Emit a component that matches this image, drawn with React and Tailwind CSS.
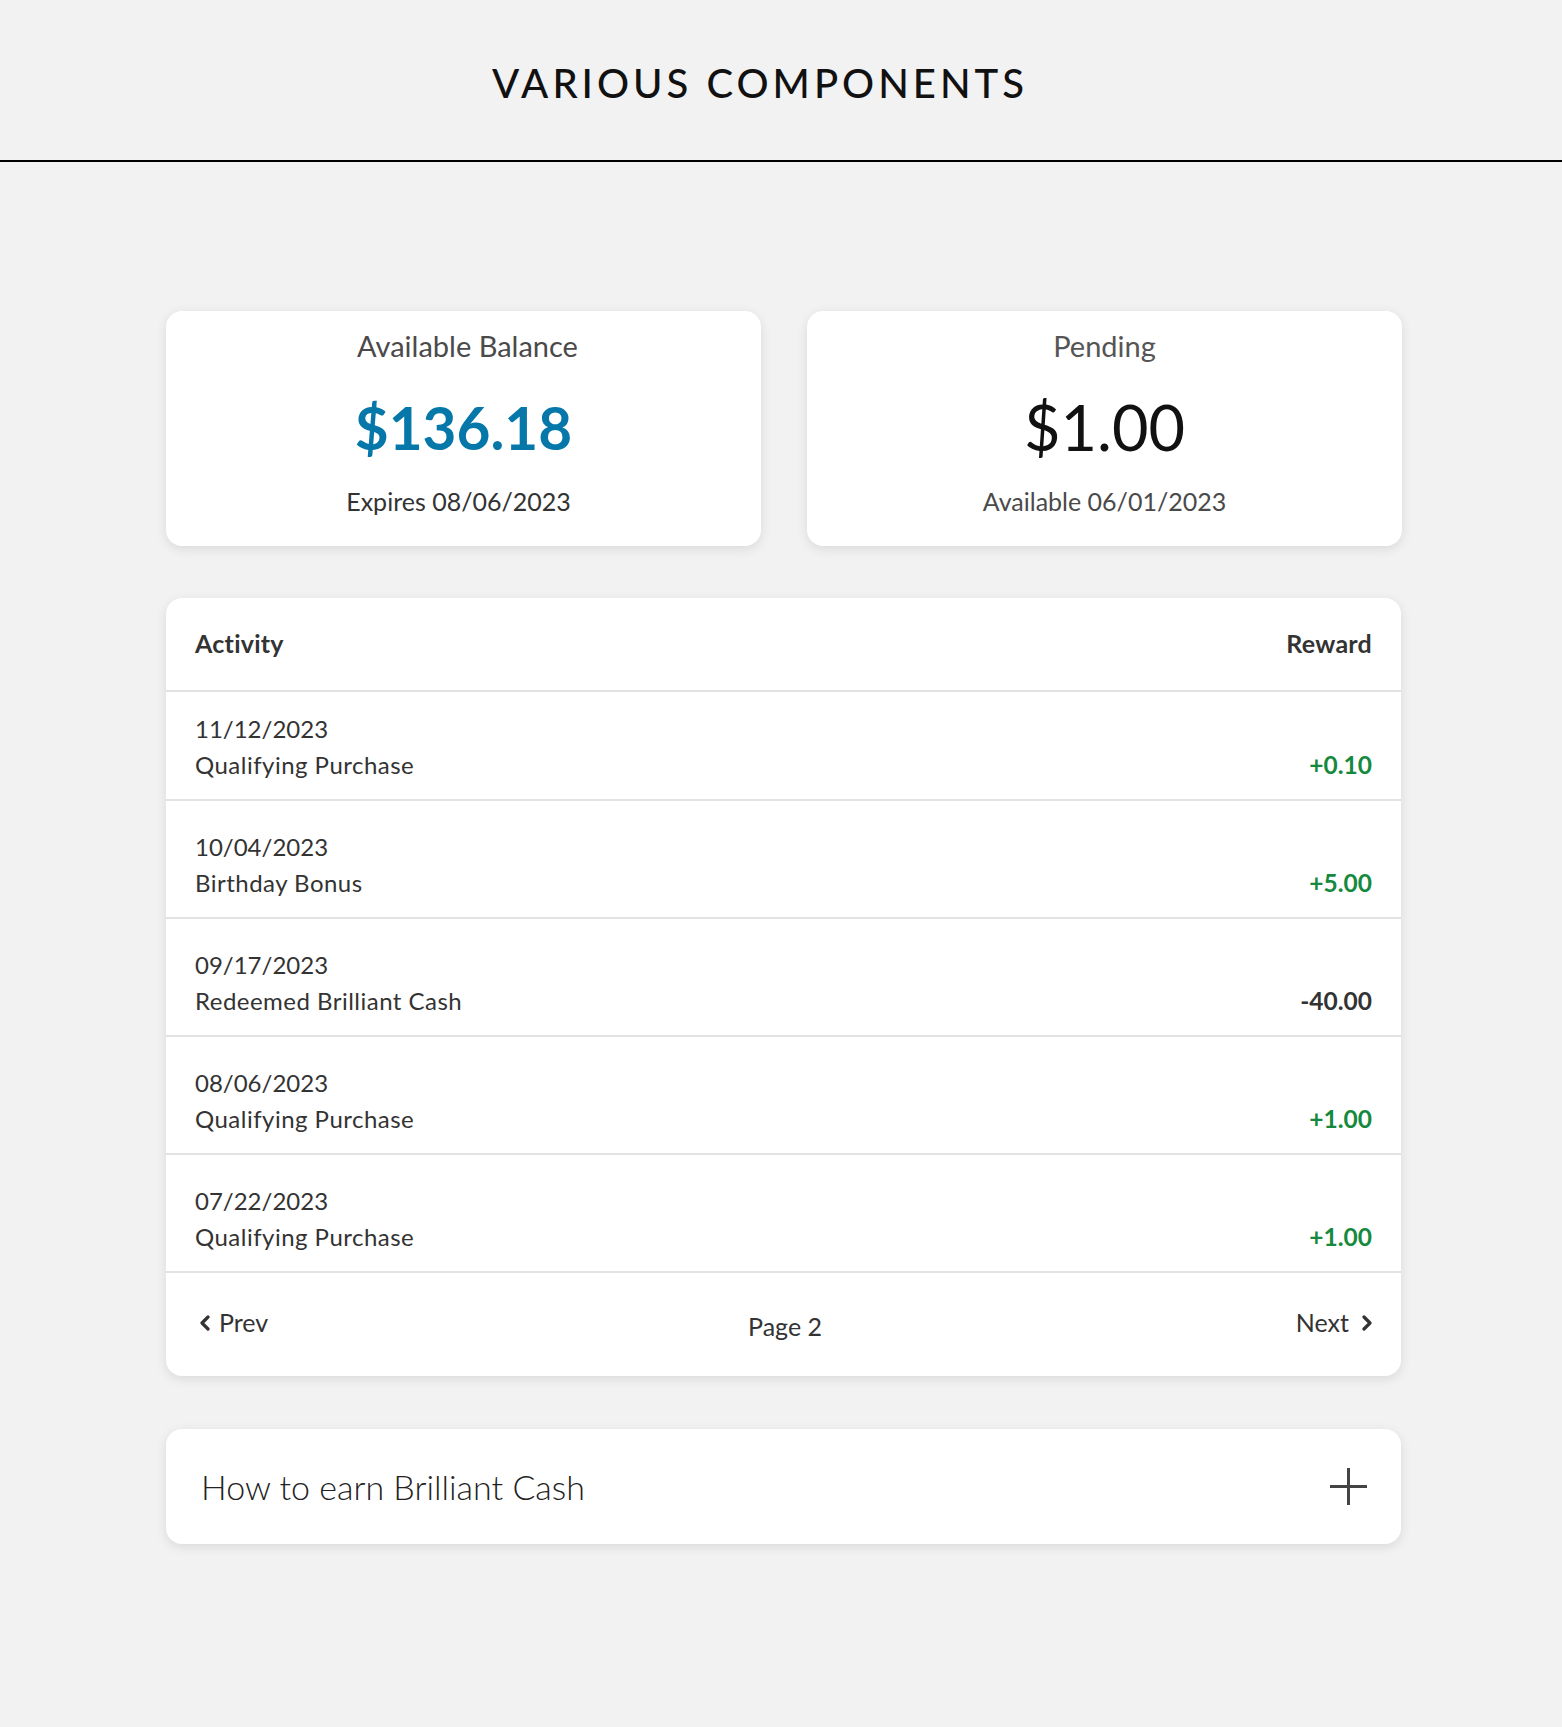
import React from "react";

const rows = [
  { date: "11/12/2023", label: "Qualifying Purchase", value: "+0.10", pos: true },
  { date: "10/04/2023", label: "Birthday Bonus", value: "+5.00", pos: true },
  { date: "09/17/2023", label: "Redeemed Brilliant Cash", value: "-40.00", pos: false },
  { date: "08/06/2023", label: "Qualifying Purchase", value: "+1.00", pos: true },
  { date: "07/22/2023", label: "Qualifying Purchase", value: "+1.00", pos: true },
];

function ChevronLeft() {
  return (
    <svg width="12" height="16" viewBox="0 0 12 16" fill="none">
      <polyline points="9,2 3,8 9,14" stroke="#333" strokeWidth="3.2" strokeLinecap="round" strokeLinejoin="round" />
    </svg>
  );
}
function ChevronRight() {
  return (
    <svg width="12" height="16" viewBox="0 0 12 16" fill="none">
      <polyline points="3,2 9,8 3,14" stroke="#333" strokeWidth="3.2" strokeLinecap="round" strokeLinejoin="round" />
    </svg>
  );
}

export default function App() {
  return (
    <div className="min-h-screen bg-[#f2f2f2] pb-[184px]" style={{ fontFamily: "Lato, 'Open Sans', sans-serif" }}>
      <header className="h-[162px] border-b-2 border-black pt-[63px] pr-[42px] text-center">
        <h1 className="text-[40px] leading-[40px] font-medium tracking-[0.1em] text-[#111]">VARIOUS COMPONENTS</h1>
      </header>

      <main className="ml-[166px] w-[1236px] pt-[149px]">
        <div className="grid grid-cols-2 gap-[46px]">
          <div className="rounded-2xl bg-white shadow-[0_3px_12px_rgba(0,0,0,0.1)] pt-[20px] pb-[32px] text-center">
            <div className="pl-[8px] text-[29px] leading-[29px] text-[#4a4a4a]">Available Balance</div>
            <div className="mt-[37px] text-[58.5px] leading-[60px] font-bold text-[#0577a9]">$136.18</div>
            <div className="pr-[10px] mt-[32px] text-[25px] leading-[25px] text-[#333]">Expires 08/06/2023</div>
          </div>
          <div className="rounded-2xl bg-white shadow-[0_3px_12px_rgba(0,0,0,0.1)] pt-[20px] pb-[32px] text-center">
            <div className="text-[29px] leading-[29px] text-[#555]">Pending</div>
            <div className="mt-[37px] text-[63px] leading-[60px] text-[#111]">$1.00</div>
            <div className="mt-[32px] text-[25px] leading-[25px] text-[#4a4a4a]">Available 06/01/2023</div>
          </div>
        </div>

        <div className="mt-[52px] w-[1235px] rounded-2xl bg-white shadow-[0_3px_12px_rgba(0,0,0,0.1)] overflow-hidden">
          <div className="flex justify-between h-[94px] border-b-2 border-[#e2e2e2] px-[29px] pt-[33px] text-[25px] leading-[25px] font-bold tracking-[0.01em] text-[#333]">
            <span>Activity</span>
            <span>Reward</span>
          </div>
          {rows.map((r, i) => (
            <div
              key={i}
              className={`flex items-end justify-between border-b-2 border-[#e2e2e2] px-[29px] pb-[16px] ${i === 0 ? "pt-[19px]" : "pt-[28px]"}`}
            >
              <div className="text-[24px] leading-[36px] text-[#333]">
                <div>{r.date}</div>
                <div className="tracking-[0.02em]">{r.label}</div>
              </div>
              <div className={`text-[24.5px] leading-[36px] font-bold ${r.pos ? "text-[#15893d]" : "text-[#333]"}`}>{r.value}</div>
            </div>
          ))}
          <div className="flex h-[103px] items-start justify-between pl-[33px] pr-[28px] pt-[37px] text-[25px] leading-[25px] text-[#333]">
            <div className="flex items-center gap-[8px]">
              <ChevronLeft />
              <span>Prev</span>
            </div>
            <span className="mt-[4px] ml-[6px]">Page 2</span>
            <div className="flex items-center gap-[12px]">
              <span>Next</span>
              <ChevronRight />
            </div>
          </div>
        </div>

        <div className="mt-[53px] flex h-[115px] w-[1235px] items-center justify-between rounded-2xl bg-white pl-[35px] pr-[34px] shadow-[0_3px_12px_rgba(0,0,0,0.1)]">
          <span className="text-[34px] leading-[34px] font-light text-[#222]">How to earn Brilliant Cash</span>
          <svg width="37" height="37" viewBox="0 0 37 37">
            <line x1="18.5" y1="0" x2="18.5" y2="37" stroke="#444" strokeWidth="3" />
            <line x1="0" y1="18.5" x2="37" y2="18.5" stroke="#444" strokeWidth="3" />
          </svg>
        </div>
      </main>
    </div>
  );
}
